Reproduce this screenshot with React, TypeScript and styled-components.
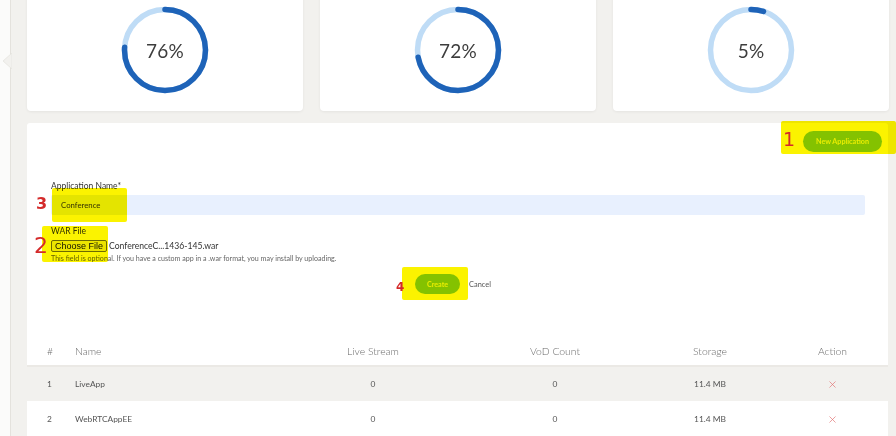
import React from "react";
import styled, { createGlobalStyle } from "styled-components";
import { X } from "lucide-react";

const GlobalStyle = createGlobalStyle`
  html, body {
    margin: 0;
    padding: 0;
    background: #f2f1ee;
    font-family: Lato, "Open Sans", sans-serif;
  }
  * { box-sizing: border-box; }
`;

const Page = styled.div`
  position: relative;
  display: flex;
  width: 896px;
  height: 436px;
  overflow: hidden;
  background: #f2f1ee;
`;

const Sidebar = styled.aside`
  position: relative;
  flex: 0 0 11px;
  background: #fbfbfa;
  border-right: 1px solid #e4e2dd;
`;

const Notch = styled.svg`
  position: absolute;
  top: 53px;
  left: 2px;
`;

const Main = styled.main`
  flex: 1;
  padding: 0 8px 0 16px;
  display: flex;
  flex-direction: column;
  gap: 12px;
`;

const CardRow = styled.div`
  display: grid;
  grid-template-columns: repeat(3, 1fr);
  gap: 17px;
  margin-top: -11px;
  margin-right: -1px;
`;

const StatCard = styled.div`
  height: 122px;
  background: #ffffff;
  border-radius: 4px;
  box-shadow: 0 1px 3px rgba(0, 0, 0, 0.06);
  display: flex;
  align-items: center;
  justify-content: center;
`;

const RingWrap = styled.div`
  display: grid;
  place-items: center;
  width: 90px;
  height: 90px;

  & > * {
    grid-area: 1 / 1;
  }
`;

const RingLabel = styled.span`
  font-size: 19px;
  color: #3d3d3d;
  letter-spacing: 0.2px;
`;

const Panel = styled.section`
  flex: 1;
  background: #ffffff;
  border-radius: 3px 3px 0 0;
`;

const Toolbar = styled.div`
  display: flex;
  justify-content: flex-end;
  padding: 8px 6px 0 0;
`;

const PillButton = styled.button<{ $w: number; $h: number }>`
  width: ${(p) => p.$w}px;
  height: ${(p) => p.$h}px;
  border: none;
  border-radius: 12px;
  background: #86cc1c;
  color: #eef9cc;
  font-family: Lato, sans-serif;
  font-weight: 700;
  font-size: 7.2px;
  padding: 0;
  cursor: pointer;
`;

const Form = styled.form`
  display: flex;
  flex-direction: column;
  padding: 0 23px 0 24px;
`;

const Label = styled.label<{ $gap: number }>`
  margin-top: ${(p) => p.$gap}px;
  font-size: 8.5px;
  line-height: 10px;
  color: #333;
`;

const TextInput = styled.input`
  margin-top: 4px;
  height: 20px;
  border: none;
  border-radius: 2px;
  background: #e8f0fe;
  padding: 0 10px;
  font-family: Lato, sans-serif;
  font-size: 7.8px;
  color: #333;
  outline: none;
`;

const FileRow = styled.div`
  margin-top: 3px;
  display: flex;
  align-items: center;
  gap: 2px;
  height: 13px;
`;

const FileButton = styled.span`
  display: inline-flex;
  align-items: center;
  height: 12px;
  padding: 0 3px;
  border: 1px solid #707070;
  border-radius: 2px;
  background: #f0f0f0;
  font-family: "Liberation Sans", Arial, sans-serif;
  font-size: 9px;
  color: #111;
`;

const FileName = styled.span`
  font-size: 8.6px;
  color: #333;
`;

const Hint = styled.p`
  margin: 3px 0 0;
  font-size: 7.1px;
  line-height: 8px;
  color: #666;
`;

const Actions = styled.div`
  margin-top: 11px;
  display: flex;
  align-items: center;
  justify-content: center;
  gap: 9px;
  padding-right: 10px;
`;

const TextButton = styled.span`
  font-size: 7.4px;
  color: #555;
  cursor: pointer;
`;

const Table = styled.div`
  margin-top: 42px;
`;

const cols = "48px 218px 160px 204px 106px 1fr";

const HeadRow = styled.div`
  display: grid;
  grid-template-columns: ${cols};
  align-items: center;
  height: 31px;
  border-bottom: 2px solid #ebe9e5;
  font-size: 10.4px;
  font-weight: 300;
  color: #6a6a6a;
`;

const Row = styled.div<{ $shade: boolean }>`
  display: grid;
  grid-template-columns: ${cols};
  align-items: center;
  height: 35px;
  background: ${(p) => (p.$shade ? "#f2f1ee" : "#ffffff")};
  border-bottom: 1px solid #ffffff;
  font-size: 8.4px;
  color: #555;
`;

const Cell = styled.div<{ $align?: "left" | "center"; $pad?: number }>`
  padding-left: ${(p) => p.$pad ?? 0}px;
  display: flex;
  justify-content: ${(p) => (p.$align === "left" ? "flex-start" : "center")};
  align-items: center;
`;

const Marker = styled.div<{ $x: number; $y: number; $w: number; $h: number }>`
  position: absolute;
  left: ${(p) => p.$x}px;
  top: ${(p) => p.$y}px;
  width: ${(p) => p.$w}px;
  height: ${(p) => p.$h}px;
  background: #fbf300;
  mix-blend-mode: multiply;
  border-radius: 2px;
`;

const Digit = styled.span<{ $x: number; $y: number; $size: number; $bold?: boolean }>`
  position: absolute;
  left: ${(p) => p.$x}px;
  top: ${(p) => p.$y}px;
  font-family: "DejaVu Sans", sans-serif;
  font-size: ${(p) => p.$size}px;
  font-weight: ${(p) => (p.$bold ? 700 : 400)};
  line-height: 1;
  color: #d42a2a;
`;

const stats = [76, 72, 5];

const apps = [
  { id: 1, name: "LiveApp", live: 0, vod: 0, storage: "11.4 MB" },
  { id: 2, name: "WebRTCAppEE", live: 0, vod: 0, storage: "11.4 MB" },
];

const highlights = [
  { x: 781, y: 121, w: 115, h: 33 },
  { x: 52, y: 188, w: 75, h: 34 },
  { x: 42, y: 226, w: 66, h: 36 },
  { x: 402, y: 267, w: 66, h: 33 },
];

const digits = [
  { n: "1", x: 783, y: 130, size: 19, bold: false },
  { n: "3", x: 36, y: 196, size: 16, bold: true },
  { n: "2", x: 34, y: 235, size: 22, bold: false },
  { n: "4", x: 396, y: 281, size: 12, bold: true },
];

function Ring({ value }: { value: number }) {
  const r = 40.5;
  const c = 2 * Math.PI * r;
  return (
    <RingWrap>
      <svg width="90" height="90" viewBox="0 0 90 90">
        <circle cx="45" cy="45" r={r} fill="none" stroke="#bfdcf6" strokeWidth="5.5" />
        <circle
          cx="45"
          cy="45"
          r={r}
          fill="none"
          stroke="#1e63b8"
          strokeWidth="5.5"
          strokeLinecap="round"
          strokeDasharray={`${(c * value) / 100} ${c}`}
          transform="rotate(-90 45 45)"
        />
      </svg>
      <RingLabel>{value}%</RingLabel>
    </RingWrap>
  );
}

export default function App() {
  return (
    <Page>
      <GlobalStyle />
      <Sidebar>
        <Notch width="10" height="16" viewBox="0 0 10 16">
          <path d="M10 0 L1 8 L10 16 Z" fill="#f2f1ee" stroke="#e6e4df" strokeWidth="0.8" />
        </Notch>
      </Sidebar>
      <Main>
        <CardRow>
          {stats.map((v, i) => (
            <StatCard key={i}>
              <Ring value={v} />
            </StatCard>
          ))}
        </CardRow>

        <Panel>
          <Toolbar>
            <PillButton $w={79} $h={21}>New Application</PillButton>
          </Toolbar>

          <Form onSubmit={(e) => e.preventDefault()}>
            <Label $gap={29}>Application Name*</Label>
            <TextInput value="Conference" readOnly />
            <Label $gap={11}>WAR File</Label>
            <FileRow>
              <FileButton>Choose File</FileButton>
              <FileName>ConferenceC...1436-145.war</FileName>
            </FileRow>
            <Hint>
              This field is optional. If you have a custom app in a .war format, you may install by uploading.
            </Hint>
            <Actions>
              <PillButton $w={45} $h={20}>Create</PillButton>
              <TextButton>Cancel</TextButton>
            </Actions>
          </Form>

          <Table>
            <HeadRow>
              <Cell $align="left" $pad={20}>#</Cell>
              <Cell $align="left">Name</Cell>
              <Cell>Live Stream</Cell>
              <Cell>VoD Count</Cell>
              <Cell>Storage</Cell>
              <Cell $pad={14}>Action</Cell>
            </HeadRow>
            {apps.map((a, i) => (
              <Row key={a.id} $shade={i % 2 === 0}>
                <Cell $align="left" $pad={20}>{a.id}</Cell>
                <Cell $align="left">{a.name}</Cell>
                <Cell>{a.live}</Cell>
                <Cell>{a.vod}</Cell>
                <Cell>{a.storage}</Cell>
                <Cell $pad={14}>
                  <X size={11} strokeWidth={1.4} color="#e06a6a" />
                </Cell>
              </Row>
            ))}
          </Table>
        </Panel>
      </Main>

      {highlights.map((h, i) => (
        <Marker key={i} $x={h.x} $y={h.y} $w={h.w} $h={h.h} />
      ))}
      {digits.map((d) => (
        <Digit key={d.n} $x={d.x} $y={d.y} $size={d.size} $bold={d.bold}>
          {d.n}
        </Digit>
      ))}
    </Page>
  );
}
